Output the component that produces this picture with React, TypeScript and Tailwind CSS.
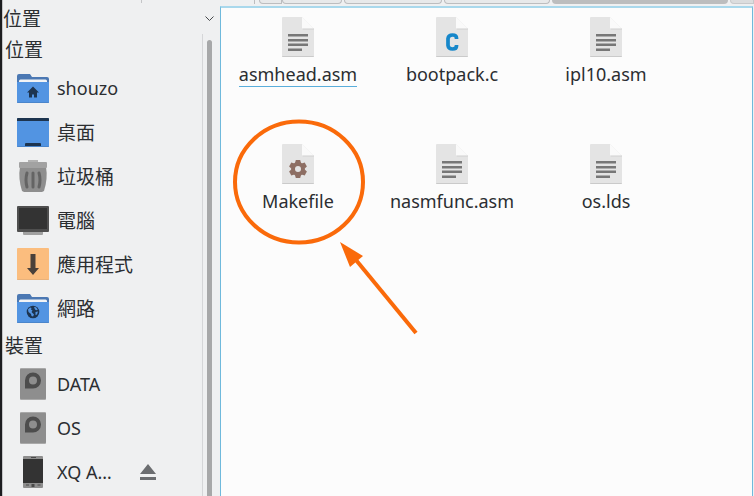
import React from "react";

const folder = (
  <>
    <path d="M0 2q0-2 2-2h11l2 3h15q2 0 2 2v4H0z" fill="#4b78b3" />
    <path d="M2 7q0-1.500 1.500-1.500h25q1.500 0 1.500 1.500v3H2z" fill="#f1f3f5" />
    <path d="M0 8h32v20q0 1-1 1H1q-1 0-1-1z" fill="#5294e2" />
    <path d="M0 28h32q0 1-1 1H1q-1 0-1-1z" fill="#4a85cb" />
  </>
);

const HomeIcon = () => (
  <svg width="32" height="29" viewBox="0 0 32 29" aria-hidden="true">
    {folder}
    <path d="M16 12.500l6 6h-2v5h-3v-3h-2v3h-3v-5h-2z" fill="#1d344f" />
  </svg>
);

const NetworkIcon = () => (
  <svg width="32" height="29" viewBox="0 0 32 29" aria-hidden="true">
    {folder}
    <circle cx="16" cy="18" r="6.3" fill="#1d344f" />
    <path d="M11 15.500l2-2 1.500.5-.5 1.500 1.500 1-1 1.500 1.500 1.500 1 1-1 2-1.500-.5-.5-2-2.500-2zM17 13l2 .2 1.800 2.300-1.300.8-1.500-.8zM18.500 18l2.500-.5-1 3-1.500.5z" fill="#5294e2" />
  </svg>
);

const DesktopIcon = () => (
  <svg width="32" height="29" viewBox="0 0 32 29" aria-hidden="true">
    <rect width="32" height="29" rx="1" fill="#5294e2" />
    <path d="M0 3V1q0-1 1-1h30q1 0 1 1v2z" fill="#1d344f" />
    <path d="M0 28h32q0 1-1 1H1q-1 0-1-1z" fill="#4a85cb" />
    <path d="M8 28v-2q0-1 1-1h14q1 0 1 1v2z" fill="#1d344f" />
  </svg>
);

const TrashIcon = () => (
  <svg width="32" height="32" viewBox="0 0 32 32" aria-hidden="true">
    <path d="M3 7h26q2 11-2 24l-2 1H7l-2-1Q1 18 3 7z" fill="#8e8e8e" />
    <path d="M11 0h10v3H11z" fill="#b2b2b2" />
    <rect x="2" y="2" width="28" height="6" rx="1" fill="#a2a2a2" />
    <path d="M10 13q-2 7 0 14M16 13v14M22 13q2 7 0 14" fill="none" stroke="#646464" strokeWidth="3" strokeLinecap="round" />
  </svg>
);

const ComputerIcon = () => (
  <svg width="32" height="29" viewBox="0 0 32 29" aria-hidden="true">
    <path d="M6 25h20v3q0 1-1 1H7q-1 0-1-1z" fill="#a0a0a0" />
    <rect width="32" height="26" rx="1" fill="#4f4f4f" />
    <rect x="2" y="2" width="28" height="21" fill="#333" />
  </svg>
);

const AppsIcon = () => (
  <svg width="32" height="32" viewBox="0 0 32 32" aria-hidden="true">
    <rect width="32" height="32" rx="1" fill="#fbbd7e" />
    <path d="M0 31h32q0 1-1 1H1q-1 0-1-1z" fill="#e8b27c" />
    <path d="M13.500 6h5v14H22l-6 7-6-7h3.500z" fill="#49403a" />
  </svg>
);

const DiskIcon = () => (
  <svg width="26" height="32" viewBox="0 0 26 32" aria-hidden="true">
    <rect width="26" height="32" rx="1" fill="#a9a9a9" />
    <rect y="1" width="26" height="30" rx="1" fill="#8e8e8e" />
    <path fillRule="evenodd" d="M5 20.500v-8a8 8 0 1 1 8 8zM13 8.500a4 4 0 1 0 0 8 4 4 0 0 0 0-8z" fill="#4d4d4d" />
  </svg>
);

const PhoneIcon = () => (
  <svg width="22" height="32" viewBox="0 0 22 32" aria-hidden="true">
    <rect x="1" width="20" height="32" rx="1" fill="#8e8e8e" />
    <rect x="1" y="3" width="20" height="24" fill="#333" />
    <path d="M9 1h5v1H9zM4 28.500h3v1H4zM15.500 28.500h3v1h-3zM9.500 28h3v3h-3z" fill="#4a4a4a" />
  </svg>
);

type Place = { name: string; icon: React.ReactNode; eject?: boolean };

const places: Place[] = [
  { name: "shouzo", icon: <HomeIcon /> },
  { name: "桌面", icon: <DesktopIcon /> },
  { name: "垃圾桶", icon: <TrashIcon /> },
  { name: "電腦", icon: <ComputerIcon /> },
  { name: "應用程式", icon: <AppsIcon /> },
  { name: "網路", icon: <NetworkIcon /> },
];

const devices: Place[] = [
  { name: "DATA", icon: <DiskIcon /> },
  { name: "OS", icon: <DiskIcon /> },
  { name: "XQ A…", icon: <PhoneIcon />, eject: true },
];

function PlaceList({ items }: { items: Place[] }) {
  return (
    <ul>
      {items.map((p) => (
        <li key={p.name} className="flex h-11 items-center pl-3.5">
          <button className="flex items-center gap-2 text-left">
            <span className="flex w-8 justify-center">{p.icon}</span>
            <span className={/^\w/.test(p.name) ? "" : "pt-0.5 text-[19px]"}>{p.name}</span>
          </button>
          {p.eject && (
            <button aria-label="卸載" className="ml-7">
              <svg width="16" height="16" viewBox="0 0 16 16" fill="#6b6d70" aria-hidden="true">
                <path d="M8 0l8 10H0zM0 13h16v3H0z" />
              </svg>
            </button>
          )}
        </li>
      ))}
    </ul>
  );
}

const gearTeeth = [0, 60, 120, 180, 240, 300];

function FileIcon({ kind }: { kind: string }) {
  return (
    <svg width="32" height="40" viewBox="0 0 32 40" aria-hidden="true">
      <path d="M1 0h19l12 12v27q0 1-1 1H1q-1 0-1-1V1q0-1 1-1z" fill="#e4e4e4" />
      <path d="M20 0l12 12H20z" fill="#fafafa" />
      <path d="M20 11.500h12v1H21z" fill="#cfcfcf" />
      <path d="M0 39h32q0 1-1 1H1q-1 0-1-1z" fill="#cacaca" />
      {kind === "text" && (
        <path d="M6 17h20v2.500H6zM6 22h20v2.500H6zM6 26.500h20V29H6zM6 31.500h14V34H6z" fill="#777" />
      )}
      {kind === "c" && (
        <path d="M20.500 22v-1q0-3-4-3t-4.500 3.500v7q.5 3.500 4.500 3.500t4-3v-1" fill="none" stroke="#1687ca" strokeWidth="3.700" />
      )}
      {kind === "make" && (
        <g transform="translate(16 25)">
          <circle r="5" fill="none" stroke="#8d6e63" strokeWidth="4" />
          {gearTeeth.map((a) => (
            <path key={a} d="M-3-6l.8-3h4.400l.8 3z" fill="#8d6e63" transform={`rotate(${a})`} />
          ))}
        </g>
      )}
    </svg>
  );
}

const files = [
  { name: "asmhead.asm", kind: "text", current: true },
  { name: "bootpack.c", kind: "c" },
  { name: "ipl10.asm", kind: "text" },
  { name: "Makefile", kind: "make", marked: true },
  { name: "nasmfunc.asm", kind: "text" },
  { name: "os.lds", kind: "text" },
];

export default function App() {
  return (
    <div className="flex h-screen overflow-hidden bg-[#eff0f1] font-['Noto_Sans','Noto_Sans_CJK_TC',sans-serif] text-lg leading-6 text-[#2b2e31]">
      <div className="w-0.5 shrink-0 bg-[#1c1d20]" />
      <aside className="flex w-[218px] shrink-0 flex-col border-l border-[#c4c5c7]">
        <div className="-mb-[3px] ml-[138px] h-[3px] w-px shrink-0 bg-[#c4c5c7]" />
        <header className="flex h-[34px] shrink-0 items-center justify-between pr-1.5 pt-1">
          <h1 className="text-[19px]">位置</h1>
          <button aria-label="收合">
            <svg width="9" height="6" viewBox="0 0 9 6" fill="none" stroke="#45484b" aria-hidden="true">
              <path d="M.5.5l4 4 4-4" />
            </svg>
          </button>
        </header>
        <div className="flex min-h-0 flex-1">
          <nav className="min-w-0 flex-1 overflow-hidden border-r border-[#d5d6d8]">
            <h2 className="h-8 pl-0.5 pt-1 text-[19px]">位置</h2>
            <PlaceList items={places} />
            <h2 className="h-8 pl-0.5 pt-1 text-[19px]">裝置</h2>
            <PlaceList items={devices} />
          </nav>
          <div className="w-[17px] pl-1 pt-1.5">
            <div className="h-full w-[5px] rounded-t-full bg-[#a7a8a9]" />
          </div>
        </div>
      </aside>
      <main className="flex min-w-0 flex-1 flex-col">
        <div className="flex h-1.5 shrink-0 gap-0.5 pb-0.5 pl-[34px]">
          <div className="mr-0.5 w-px bg-[#bcbdbf]" />
          <div className="-mr-0.5 w-[23px] rounded-bl-sm border border-t-0 border-[#bcbdbf] bg-[#e8e9ea]" />
          <div className="w-[60px] rounded-b-sm border border-t-0 border-[#bcbdbf] bg-[#e8e9ea]" />
          <div className="w-[98px] rounded-b-sm border border-t-0 border-[#bcbdbf] bg-[#e8e9ea]" />
          <div className="w-[106px] rounded-b-sm border border-t-0 border-[#bcbdbf] bg-[#e8e9ea]" />
          <div className="flex-1 rounded-b-sm bg-[#bcbdbe]" />
          <div className="w-6 rounded-bl-sm border border-t-0 border-[#c8c9cb] bg-[#dcddde]" />
        </div>
        <section className="mr-px flex-1 border border-t-2 border-b-0 border-[#6fb9dc] border-t-[#a9d8ec] bg-[#fcfcfc]">
          <ul className="grid grid-cols-[repeat(auto-fill,154px)] gap-y-10 pt-[9px]">
            {files.map((f) => (
              <li key={f.name} className="relative flex justify-center">
                <button className="flex h-[87px] flex-col items-center gap-[5px]">
                  <FileIcon kind={f.kind} />
                  <span className={f.current ? "border-b border-[#5aaedb]" : ""}>{f.name}</span>
                </button>
                {f.marked && (
                  <svg className="pointer-events-none absolute -top-7 left-2.5" width="190" height="220" viewBox="0 0 190 220" fill="none" stroke="#fa6a0a" strokeWidth="4" aria-hidden="true">
                    <ellipse cx="68" cy="66" rx="64" ry="60.500" />
                    <path d="M125 144l60 73" />
                    <path d="M109 126l23 14-13 11z" fill="#fa6a0a" stroke="none" />
                  </svg>
                )}
              </li>
            ))}
          </ul>
        </section>
      </main>
    </div>
  );
}
